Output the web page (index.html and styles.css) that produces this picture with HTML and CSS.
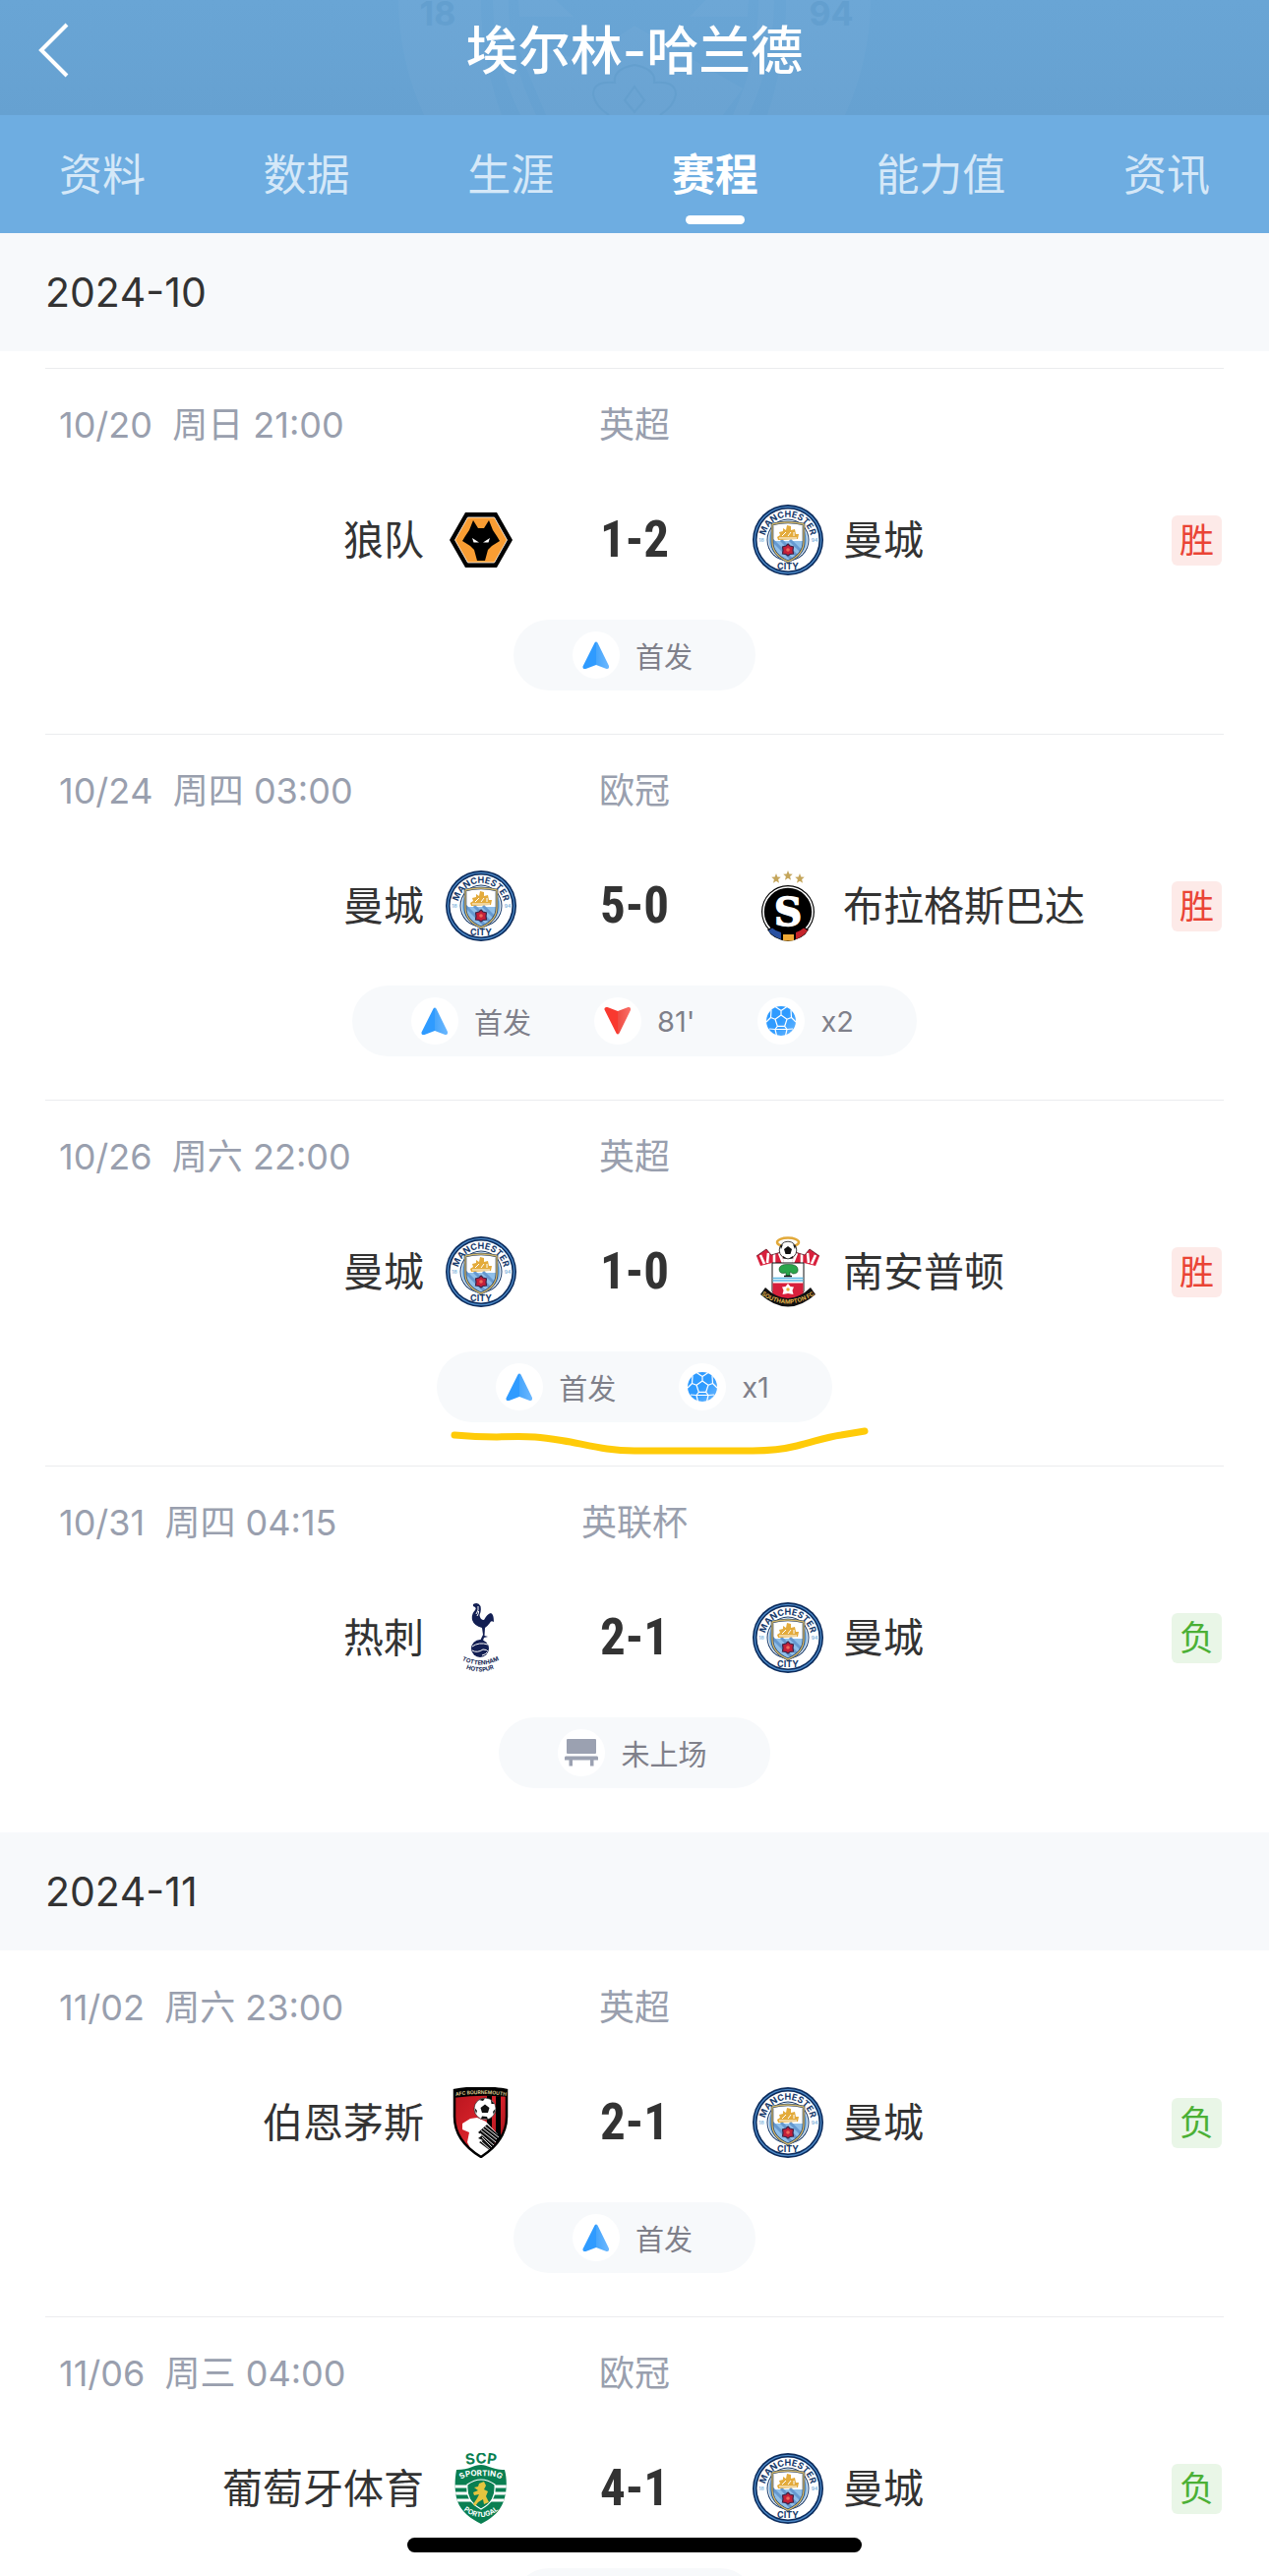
FILE: index.html
```
<!DOCTYPE html>
<html lang="zh-CN">
<head>
    <meta charset="UTF-8">
    <meta name="viewport" content="width=device-width, initial-scale=1.0">
    <title>埃尔林-哈兰德 赛程</title>
    <link rel="stylesheet" href="styles.css">
</head>
<body>
    <!-- Shared gradients and clips, must stay rendered to be usable -->
    <svg class="shared-defs" aria-hidden="true">
        <defs>
            <linearGradient id="blueFade" x1="0" x2="1"><stop offset="0.5" stop-color="#2f9bff"/><stop offset="0.5" stop-color="#46a5fb"/><stop offset="1" stop-color="#6cb8ff"/></linearGradient>
            <linearGradient id="redFade" x1="0" x2="1"><stop offset="0.5" stop-color="#f9392f"/><stop offset="0.5" stop-color="#ee4a41"/><stop offset="1" stop-color="#fb7068"/></linearGradient>
            <linearGradient id="ballFade" x1="0" x2="1" y1="0" y2="1"><stop offset="0.5" stop-color="#2f9bff"/><stop offset="1" stop-color="#6cb8ff"/></linearGradient>
            <linearGradient id="cherryFade" x1="0" x2="1" y1="0" y2="1"><stop offset="0" stop-color="#b5141c"/><stop offset="0.5" stop-color="#d8222b"/><stop offset="1" stop-color="#8d0f15"/></linearGradient>
            <clipPath id="cityShield"><path d="M20 20Q36 16 52 20V38C52 48 45 54 36 58C27 54 20 48 20 38Z"/></clipPath>
            <clipPath id="cherryShield"><path d="M9 3Q36 -2 62 3V30C62 50 50 62 36 71C21 62 9 50 9 30Z"/></clipPath>
            <clipPath id="lionShield"><path d="M36 12C44 12 46 17 60 17C63 28 62 40 59 49C55 60 46 67 36 72C26 67 16 60 12 49C9 40 9 28 11 17C25 17 28 12 36 12Z"/></clipPath>
            <path id="cityArc" d="M12.800 40A23.500 23.500 0 1 1 59.200 40"/>
            <path id="saintsArc" d="M10 60Q36 77 62 60"/>
            <path id="spursArc1" d="M17 59Q35 68 54 59"/>
            <path id="spursArc2" d="M20 67Q35 74 50 67"/>
            <path id="cherryArc" d="M10 9Q36 5 62 9"/>
            <path id="lionArc1" d="M12 33C17 21 27 24 36 23C46 24 54 21 60 33"/>
            <path id="lionArc2" d="M14 54Q36 76 58 54"/>
            <path id="scpArc" d="M13 14Q36 7 59 14"/>
        </defs>
    </svg>

    <!-- Crests and icons -->
    <svg class="sprite" aria-hidden="true">
        <symbol id="city" viewBox="0 0 72 72">
            <circle cx="36" cy="36" r="36" fill="#0b2b5c"/>
            <circle cx="36" cy="36" r="33.7" fill="none" stroke="#4e8bc9" stroke-width="1.3"/>
            <circle cx="36" cy="36" r="31.5" fill="#fff"/>
            <circle cx="36" cy="36" r="21.5" fill="#173a6b"/>
            <circle cx="36" cy="36" r="20.5" fill="#fff"/>
            <circle cx="36" cy="36" r="19.5" fill="#7ab2e2"/>
            <g clip-path="url(#cityShield)">
                <path fill="#fff" d="M18 16H54V38H18Z"/>
                <path fill="#8fbfe9" d="M18 37H54V60H18Z"/>
                <path stroke="#6699d0" stroke-width="3" d="M20 36L44 60M29 36L53 60M38 36L60 58"/>
                <path fill="#e3ab3c" d="M25 33L28 31 27 28 31 27 31 24 34 26 35 21 39 22 39 26 43 25 44 30 47 30 46 35 26 36Z"/>
                <path stroke="#fff" stroke-width="1" fill="none" d="M30 32L34 28M36 32L39 28M42 32V28M27 34H45"/>
            </g>
            <path d="M20 20Q36 16 52 20V38C52 48 45 54 36 58C27 54 20 48 20 38Z" fill="none" stroke="#1a3560" stroke-width="2.6"/>
            <path d="M20 20Q36 16 52 20V38C52 48 45 54 36 58C27 54 20 48 20 38Z" fill="none" stroke="#cfb56a" stroke-width="1.4"/>
            <path fill="#c5203a" stroke="#3c2448" stroke-width="1.2" d="M36 40L38 42 41.500 43 41 46.500 41.500 50 38 50.500 36 52 34 50.500 30.500 50 31 46.500 30.500 43 34 42Z"/>
            <circle cx="36" cy="46" r="1.800" fill="#ef6a5a"/>
            <text class="crest-text" font-size="9" fill="#173a6b"><textPath href="#cityArc" startOffset="50%" text-anchor="middle">MANCHESTER</textPath></text>
            <text class="crest-text" x="36" y="66" font-size="9" fill="#173a6b" text-anchor="middle">CITY</text>
            <text class="crest-text" x="9" y="38" font-size="5" fill="#8cb9e0" text-anchor="middle">18</text>
            <text class="crest-text" x="63" y="38" font-size="5" fill="#8cb9e0" text-anchor="middle">94</text>
        </symbol>

        <symbol id="wolves" viewBox="0 0 72 72">
            <path fill="#000" d="M20 8H52L68 36 52 64H20L4 36Z"/>
            <path fill="#f99d33" stroke="#fff" stroke-width="0.800" d="M22.500 13H49.500L62.500 36 49.500 59H22.500L9.500 36Z"/>
            <path fill="#000" d="M28 16L33 24H39L44 16 48 26 52 32 55 37 47 42 43 46 40 57H32L29 46 25 42 17 37 20 32 24 26Z"/>
            <path fill="#fff" d="M27 34L34 38.500H28.500ZM45 34L38 38.500H43.500Z"/>
        </symbol>

        <symbol id="sparta" viewBox="0 0 72 72">
            <g fill="#c4a55a">
                <path id="star" d="M36 0L37.300 3.400 40.800 3.700 38.100 6 39 9.800 36 7.700 33 9.800 33.900 6 31.200 3.700 34.700 3.400Z"/>
                <use href="#star" transform="translate(-12 3)"/>
                <use href="#star" transform="translate(12 3)"/>
            </g>
            <circle cx="36" cy="42" r="27" fill="#000"/>
            <circle cx="36" cy="42" r="25" fill="none" stroke="#fff" stroke-width="1.600"/>
            <path d="M15 60L21 57Q36 66 51 57L57 60Q52 70 36 72Q20 70 15 60Z" fill="#000"/>
            <path fill="#2850a0" d="M16 61L20 58.500Q24 62 29 63V70Q20 67 16 61Z"/>
            <path fill="#efaa35" d="M31 65H42V71Q36 72 31 71Z"/>
            <path fill="#c4242b" d="M56 61L52 58.500Q48 62 44 63V70Q52 67 56 61Z"/>
            <text class="slab-text" x="36" y="56" font-size="39" fill="#fff" stroke="#fff" stroke-width="1.500" text-anchor="middle">S</text>
        </symbol>

        <symbol id="saints" viewBox="0 0 72 72">
            <path fill="#d8203c" d="M4 20L14 13 19 19 29 16 32 27H40L43 16 53 19 58 13 68 20 64 30 52 27H20L8 30Z"/>
            <path stroke="#fff" stroke-width="2.600" d="M8 19L12 28M16 17L15 27M22 18L22 27M27 17L31 27M64 19L60 28M56 17L57 27M50 18V27M45 17L41 27"/>
            <path stroke="#5a1020" stroke-width="0.800" fill="none" d="M4 20L14 13 19 19 29 16M43 16L53 19 58 13 68 20"/>
            <ellipse cx="36" cy="6" rx="11" ry="4.500" fill="#fff" stroke="#e2a93a" stroke-width="2.500"/>
            <circle cx="36" cy="14" r="8.800" fill="#fff" stroke="#111" stroke-width="0.800"/>
            <path fill="#111" d="M36 10L40 13 38.500 18H33.500L32 13ZM28 10L31 8 29 13ZM44 10L41 8 43 13ZM31 20L35 22.500H31ZM41 20L37 22.500H41Z"/>
            <path fill="#fff" stroke="#111" stroke-width="1" d="M20 27H52V56Q48 62 36 65Q24 62 20 56Z"/>
            <path stroke="#58b7e3" stroke-width="1.300" d="M20.500 42.500H51.500M20.500 45H51.500"/>
            <path fill="#d8203c" d="M20.500 47.500H51.500V58Q46 63 36 65Q26 63 20.500 58Z"/>
            <path fill="#2aa54a" stroke="#134d25" stroke-width="0.600" d="M27 33Q28 28 36 28.500Q45 28 46 33Q47 38 41 38L38 36V40H34V37Q27 39 27 33Z"/>
            <path stroke="#111" stroke-width="1.500" d="M32 40.500H40"/>
            <path fill="#fff" d="M36 48L38.500 51 42 51.500 40.500 55 41.500 59 36 58 30.500 59 31.500 55 30 51.500 33.500 51Z"/>
            <circle cx="36" cy="54" r="1.700" fill="#e8b53a"/>
            <path fill="#111" d="M13 52Q36 74 59 52L64 59Q36 84 8 59Z"/>
            <text class="crest-text" font-size="6" fill="#e0b24b"><textPath href="#saintsArc" startOffset="50%" text-anchor="middle">SOUTHAMPTON FC</textPath></text>
        </symbol>

        <symbol id="spurs" viewBox="0 0 72 72">
            <path fill="#131f53" d="M28 2Q33 -1 35.500 4Q36.500 9 34.500 13Q35 18 39 18Q42 12 46 11Q49 12 49 20Q46 18 45 21Q42 25 40 26L39.500 34L43 35 39 36 38 39H35L38 33 37 26Q29 24 27 18Q26 12 30 8Q32 5 28 4Z"/>
            <path stroke="#fff" stroke-width="1" fill="none" d="M33 4Q34 8 31 12M33.500 9Q34 11 32 14"/>
            <circle cx="35" cy="47" r="9" fill="#131f53"/>
            <path stroke="#fff" stroke-width="1" fill="none" d="M27 45Q34 40 43 43M27 49Q32 52 38 48Q42 48 43 50M37 54Q41 53 42 51"/>
            <text class="crest-text" font-size="6" fill="#131f53"><textPath href="#spursArc1" startOffset="50%" text-anchor="middle">TOTTENHAM</textPath></text>
            <text class="crest-text" font-size="6" fill="#131f53"><textPath href="#spursArc2" startOffset="50%" text-anchor="middle">HOTSPUR</textPath></text>
        </symbol>

        <symbol id="cherries" viewBox="0 0 72 72">
            <g clip-path="url(#cherryShield)">
                <path fill="url(#cherryFade)" d="M8 0H64V72H8Z"/>
                <path fill="#000" d="M8 -2H64V10Q36 7 8 11ZM42 9H47V60H42ZM51 9H56V60H51Z"/>
                <path fill="#fff" d="M17 37L25 32 32 31 41 35 53 48 50 56 44 66 36 72 26 64 22 56 24 46 17 43Z"/>
                <path fill="#111" d="M33 46L42 38 54 49 46 65 34 56 38 54 33 52 37 49Z"/>
                <path stroke="#fff" stroke-width="0.900" fill="none" d="M36 44L51 56M38 42L52 53M35 47L49 59M37 51L48 62M40 40L54 51M36 55L46 64"/>
            </g>
            <circle cx="40" cy="22" r="11" fill="#fff" stroke="#111" stroke-width="0.600"/>
            <path fill="#111" d="M40 17.500L44.500 21 43 26H37L35.500 21ZM34 13Q37 11 40 11.500L38 14ZM46 13L49.500 17 46.500 17ZM29.500 21L32 24 31 27ZM50.500 22L48 25 49 28ZM36 32L37 29.500 42 30 43 32.500Z"/>
            <path d="M9 3Q36 -2 62 3V30C62 50 50 62 36 71C21 62 9 50 9 30Z" fill="none" stroke="#000" stroke-width="2.500"/>
            <text class="crest-text" font-size="5" fill="#d9c58e"><textPath href="#cherryArc" startOffset="50%" text-anchor="middle">AFC BOURNEMOUTH</textPath></text>
        </symbol>

        <symbol id="sporting" viewBox="0 0 72 72">
            <g clip-path="url(#lionShield)">
                <path fill="#0a7f52" d="M8 10H64V72H8Z"/>
                <path stroke="#fff" stroke-width="3" d="M8 34H64M8 41H64M8 48H64"/>
            </g>
            <text class="crest-text" font-size="15" fill="#0a7f52" stroke="#fff" stroke-width="2" paint-order="stroke"><textPath href="#scpArc" startOffset="50%" text-anchor="middle">SCP</textPath></text>
            <path fill="#0a7f52" stroke="#fff" stroke-width="1.200" d="M36 27Q43 27 50 32C51 44 47 51 36 57C25 51 21 44 22 32Q29 27 36 27Z"/>
            <path fill="#e5c53f" d="M34 31L39 29 41 33 39 37 43 39 41 44 44 50 39 52 38 47 33 50 30 54 28 52 32 46 34 42 29 43 28 40 33 38 29 35 33 34Z"/>
            <text class="crest-text" font-size="8" fill="#fff"><textPath href="#lionArc1" startOffset="50%" text-anchor="middle">SPORTING</textPath></text>
            <text class="crest-text" font-size="7" fill="#fff"><textPath href="#lionArc2" startOffset="50%" text-anchor="middle">PORTUGAL</textPath></text>
        </symbol>

        <symbol id="icon-start" viewBox="0 0 48 48">
            <path fill="url(#blueFade)" d="M22.500 11.500Q24 9.500 25.500 11.500L37 35Q37.500 38.500 34.500 38L24 34 13.500 38Q10 38.500 10.500 35.500Z"/>
        </symbol>
        <symbol id="icon-off" viewBox="0 0 48 48">
            <path fill="url(#redFade)" d="M22.500 36.500Q24 38.500 25.500 36.500L37 13Q37.500 9.500 34.500 10L24 14 13.500 10Q10 9.500 10.500 12.500Z"/>
        </symbol>
        <symbol id="icon-goal" viewBox="0 0 48 48">
            <circle cx="24" cy="24" r="15" fill="url(#ballFade)"/>
            <path stroke="#fff" stroke-width="1.200" fill="none" stroke-linejoin="round" d="M24 18L30 22.300 27.700 29.300H20.300L18 22.300ZM24 18V13.500M30 22.300L34.500 20.500M27.700 29.300L30 32.500M20.300 29.300L18 32.500M18 22.300L13.500 20.500M24 13.500L18 9.500M24 13.500L30 9.500M34.500 20.500L34 13M34.500 20.500L39 25M30 32.500L36 32M30 32.500L28.500 39M18 32.500H30M18 32.500L12 32M18 32.500L19.500 39M13.500 20.500L9 25M13.500 20.500L14 13"/>
        </symbol>
        <symbol id="icon-bench" viewBox="0 0 48 48">
            <path fill="#9ba1b1" d="M10 10H38Q39 10 39 11V24Q39 25 38 25H10Q9 25 9 24V11Q9 10 10 10ZM8 27.500H40Q41 27.500 41 29V31.500H36.500V37.500H33V31.500H15V37.500H11.500V31.500H7V29Q7 27.500 8 27.500Z"/>
        </symbol>
    </svg>

    <div class="app">
        <header class="header">
            <svg class="header-crest" viewBox="0 0 480 117" aria-hidden="true">
                <path class="crest-tone" d="M0 0H84Q84 60 105 117H26Q0 60 0 0ZM480 0H394Q394 60 375 117H454Q480 60 480 0ZM96 0H112Q112 60 140 117H124Q96 60 96 0ZM382 0H366Q366 60 340 117H356Q382 60 382 0ZM122 0H160L178 17H123ZM356 0H312L296 17H355ZM240 26L350 90 330 117H150L122 50 190 60Z"/>
                <text class="crest-year" x="40" y="26" text-anchor="middle">18</text>
                <text class="crest-year" x="440" y="26" text-anchor="middle">94</text>
                <path class="crest-rose" d="M240 66Q262 70 260 84Q282 82 282 96Q280 108 266 117M240 66Q218 70 220 84Q198 82 198 96Q200 108 214 117M240 88L250 102 240 114 230 102Z"/>
            </svg>
            <button class="back-button" type="button" aria-label="返回">
                <svg viewBox="0 0 32 56"><path d="M29 2L3 28 29 54" fill="none" stroke="#fff" stroke-width="4"/></svg>
            </button>
            <h1 class="header-title">埃尔林-哈兰德</h1>
        </header>

        <nav class="tabs">
            <a class="tab" href="#profile">资料</a>
            <a class="tab" href="#stats">数据</a>
            <a class="tab" href="#career">生涯</a>
            <a class="tab active" href="#schedule" aria-current="page">赛程</a>
            <a class="tab" href="#ability">能力值</a>
            <a class="tab" href="#news">资讯</a>
        </nav>

        <main class="schedule" id="schedule">
            <h2 class="month">2024-10</h2>
            <div class="match-list continued">
                <article class="match">
                    <div class="meta"><time>10/20&nbsp; 周日 21:00</time><span>英超</span></div>
                    <div class="result">
                        <div class="team home"><span>狼队</span><svg class="crest"><use href="#wolves"/></svg></div>
                        <strong class="score">1-2</strong>
                        <div class="team away"><svg class="crest"><use href="#city"/></svg><span>曼城</span></div>
                        <span class="badge win">胜</span>
                    </div>
                    <div class="events">
                        <span class="event"><svg class="icon"><use href="#icon-start"/></svg>首发</span>
                    </div>
                </article>

                <article class="match">
                    <div class="meta"><time>10/24&nbsp; 周四 03:00</time><span>欧冠</span></div>
                    <div class="result">
                        <div class="team home"><span>曼城</span><svg class="crest"><use href="#city"/></svg></div>
                        <strong class="score">5-0</strong>
                        <div class="team away"><svg class="crest"><use href="#sparta"/></svg><span>布拉格斯巴达</span></div>
                        <span class="badge win">胜</span>
                    </div>
                    <div class="events">
                        <span class="event"><svg class="icon"><use href="#icon-start"/></svg>首发</span>
                        <span class="event"><svg class="icon"><use href="#icon-off"/></svg>81'</span>
                        <span class="event"><svg class="icon"><use href="#icon-goal"/></svg>x2</span>
                    </div>
                </article>

                <article class="match">
                    <div class="meta"><time>10/26&nbsp; 周六 22:00</time><span>英超</span></div>
                    <div class="result">
                        <div class="team home"><span>曼城</span><svg class="crest"><use href="#city"/></svg></div>
                        <strong class="score">1-0</strong>
                        <div class="team away"><svg class="crest"><use href="#saints"/></svg><span>南安普顿</span></div>
                        <span class="badge win">胜</span>
                    </div>
                    <div class="events">
                        <span class="event"><svg class="icon"><use href="#icon-start"/></svg>首发</span>
                        <span class="event"><svg class="icon"><use href="#icon-goal"/></svg>x1</span>
                    </div>
                    <svg class="marker" viewBox="0 0 430 32" aria-hidden="true"><path d="M7 10Q28 12 50 12C90 10 100 13 125 17C150 22 165 26 190 26H310Q335 26 355 21C375 16 385 12 400 10L424 6"/></svg>
                </article>

                <article class="match">
                    <div class="meta"><time>10/31&nbsp; 周四 04:15</time><span>英联杯</span></div>
                    <div class="result">
                        <div class="team home"><span>热刺</span><svg class="crest"><use href="#spurs"/></svg></div>
                        <strong class="score">2-1</strong>
                        <div class="team away"><svg class="crest"><use href="#city"/></svg><span>曼城</span></div>
                        <span class="badge loss">负</span>
                    </div>
                    <div class="events">
                        <span class="event"><svg class="icon"><use href="#icon-bench"/></svg>未上场</span>
                    </div>
                </article>
            </div>

            <h2 class="month">2024-11</h2>
            <div class="match-list">
                <article class="match">
                    <div class="meta"><time>11/02&nbsp; 周六 23:00</time><span>英超</span></div>
                    <div class="result">
                        <div class="team home"><span>伯恩茅斯</span><svg class="crest"><use href="#cherries"/></svg></div>
                        <strong class="score">2-1</strong>
                        <div class="team away"><svg class="crest"><use href="#city"/></svg><span>曼城</span></div>
                        <span class="badge loss">负</span>
                    </div>
                    <div class="events">
                        <span class="event"><svg class="icon"><use href="#icon-start"/></svg>首发</span>
                    </div>
                </article>

                <article class="match">
                    <div class="meta"><time>11/06&nbsp; 周三 04:00</time><span>欧冠</span></div>
                    <div class="result">
                        <div class="team home"><span>葡萄牙体育</span><svg class="crest"><use href="#sporting"/></svg></div>
                        <strong class="score">4-1</strong>
                        <div class="team away"><svg class="crest"><use href="#city"/></svg><span>曼城</span></div>
                        <span class="badge loss">负</span>
                    </div>
                    <div class="events">
                        <span class="event"><svg class="icon"><use href="#icon-start"/></svg>首发</span>
                    </div>
                </article>
            </div>
        </main>
        <div class="home-indicator"></div>
    </div>
</body>
</html>
```
FILE: styles.css
```
* {
    box-sizing: border-box;
}

body {
    margin: 0;
    background-color: #fff;
    color: #333;
    font-family: Inter, "Noto Sans CJK SC", sans-serif;
    font-kerning: none;
}

.shared-defs {
    position: absolute;
    width: 0;
    height: 0;
}

.sprite {
    display: none;
}

.crest-text {
    font-family: Inter, sans-serif;
    font-weight: 700;
}

.slab-text {
    font-family: "DejaVu Serif", serif;
    font-weight: 700;
}

.app {
    display: flex;
    flex-direction: column;
    height: 100vh;
    overflow: hidden;
}

/* Header */
.header {
    position: relative;
    display: flex;
    flex-shrink: 0;
    justify-content: center;
    height: 117px;
    background: linear-gradient(#69a5d5, #66a1d1);
    color: #fff;
}

.header-crest {
    position: absolute;
    top: 0;
    left: calc(50% - 240px);
    width: 480px;
    height: 117px;
}

.crest-tone {
    fill: #fff;
    opacity: 0.03;
}

.crest-year {
    fill: #639fcf;
    font-size: 34px;
    font-weight: 700;
}

.crest-rose {
    fill: none;
    stroke: #649fce;
    stroke-width: 2;
}

.back-button {
    position: absolute;
    top: 23px;
    left: 39px;
    width: 32px;
    height: 56px;
    padding: 0;
    border: none;
    background: none;
    cursor: pointer;
}

.back-button svg {
    display: block;
    width: 32px;
    height: 56px;
}

.header-title {
    position: relative;
    margin: 14px 0 0;
    font-size: 53px;
    font-weight: 500;
    line-height: 76px;
}

/* Tabs */
.tabs {
    display: flex;
    flex-shrink: 0;
    justify-content: space-between;
    height: 120px;
    padding: 3px 60px 0;
    background-color: #6eade1;
}

.tab {
    position: relative;
    color: #d5e8f8;
    font-size: 44px;
    line-height: 117px;
    text-decoration: none;
}

.tab.active {
    color: #fff;
    font-weight: 700;
}

.tab.active::after {
    content: "";
    position: absolute;
    bottom: 9px;
    left: calc(50% - 30px);
    width: 60px;
    height: 9px;
    border-radius: 5px;
    background-color: #fff;
}

/* Schedule */
.schedule {
    flex: 1;
    min-height: 0;
    overflow-y: auto;
    scrollbar-width: none;
}

.month {
    margin: 0;
    padding: 0 46px;
    background-color: #f7f9fb;
    font-size: 41px;
    font-weight: 400;
    line-height: 120px;
}

.match-list {
    padding: 0 46px;
}

.match-list.continued {
    padding-top: 17px;
    padding-bottom: 1px;
}

.match {
    position: relative;
    padding: 33px 0 44px;
    border-top: 1px solid #ebecee;
}

.match-list:not(.continued) .match:first-child {
    border-top-color: transparent;
}

.meta {
    display: grid;
    grid-template-columns: 1fr auto 1fr;
    padding: 0 14px;
    color: #999fae;
    font-size: 36px;
    line-height: 48px;
}

.result {
    position: relative;
    display: grid;
    grid-template-columns: 1fr 240px 1fr;
    align-items: center;
    margin-top: 57px;
}

.team {
    display: flex;
    align-items: center;
    font-size: 41px;
    line-height: 72px;
    white-space: nowrap;
}

.home {
    justify-content: flex-end;
    gap: 22px;
}

.away {
    gap: 20px;
}

.crest {
    width: 72px;
    height: 72px;
}

.score {
    font-family: "Roboto Condensed", "Liberation Sans Narrow", Roboto, sans-serif;
    font-size: 51px;
    font-weight: 700;
    line-height: 72px;
    text-align: center;
}

.badge {
    position: absolute;
    top: 11px;
    right: 2px;
    width: 51px;
    height: 51px;
    border-radius: 6px;
    font-size: 35px;
    line-height: 50px;
    text-align: center;
}

.win {
    background-color: #fdeae8;
    color: #ea4435;
}

.loss {
    background-color: #e9f6e7;
    color: #4bb035;
}

.events {
    display: flex;
    gap: 64px;
    width: fit-content;
    height: 72px;
    margin: 45px auto 0;
    padding: 0 64px 0 60px;
    border-radius: 36px;
    background-color: #f7f9fb;
}

.event {
    display: flex;
    align-items: center;
    gap: 16px;
    color: #7f808a;
    font-size: 29px;
}

.icon {
    width: 48px;
    height: 48px;
    border-radius: 50%;
    background-color: #fff;
}

.marker {
    position: absolute;
    top: 330px;
    left: calc(50% - 190px);
    width: 430px;
    height: 32px;
    fill: none;
    stroke: #ffcb09;
    stroke-width: 7;
    stroke-linecap: round;
}

.home-indicator {
    position: fixed;
    bottom: 24px;
    left: 50%;
    width: 462px;
    height: 15px;
    margin-left: -231px;
    border-radius: 8px;
    background-color: #000;
}
```
